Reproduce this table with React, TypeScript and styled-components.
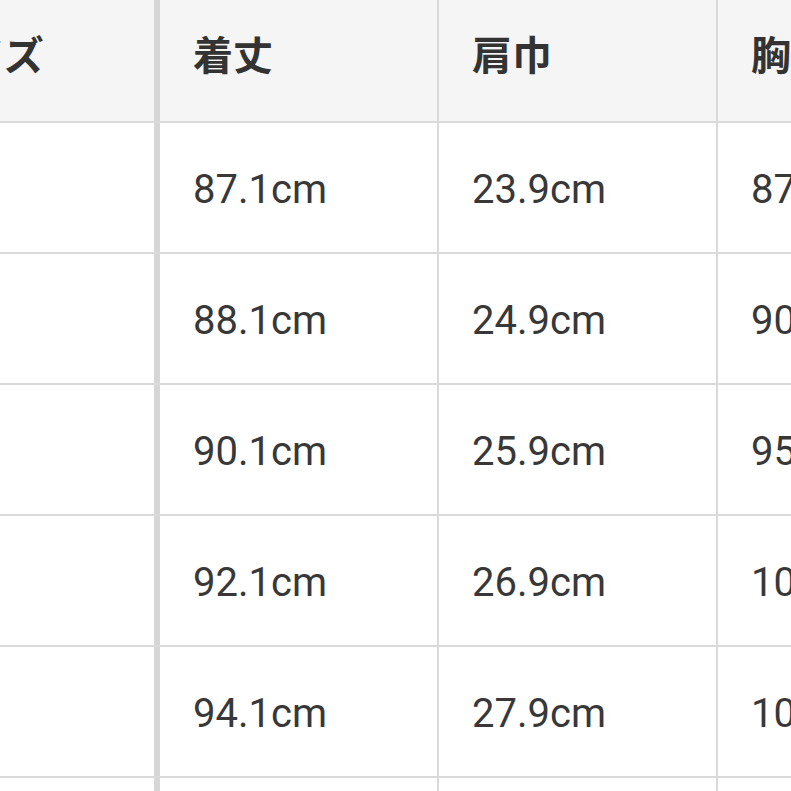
import React from 'react';
import styled, {createGlobalStyle} from 'styled-components';

const GlobalStyle = createGlobalStyle`
  html, body {
    margin: 0;
    padding: 0;
    background: #ffffff;
  }
`;

interface CellProps {
    first?: boolean;
}

const Viewport = styled.div`
  width: 791px;
  height: 791px;
  overflow: hidden;
  background: #ffffff;
`;

const Table = styled.div`
  margin-left: -108px;
  width: 1200px;
  display: flex;
  flex-direction: column;
`;

const Row = styled.div`
  display: flex;
  height: 131px;
  box-sizing: border-box;
  border-bottom: 2px solid #dadada;
`;

const HeadRow = styled(Row)`
  height: 123px;
  background: #f5f5f5;
`;

const Cell = styled.div<CellProps>`
  box-sizing: border-box;
  width: ${props => props.first ? '268px' : '279px'};
  flex-shrink: 0;
  display: flex;
  align-items: center;
  padding: 4px 0 0 33px;
  border-right: ${props => props.first ? '6px solid #d6d6d6' : '2px solid #dadada'};
  font-family: Roboto, "Noto Sans CJK JP", sans-serif;
  font-size: 40px;
  color: #383838;
`;

const HeadCell = styled(Cell)`
  padding: 0 0 16px 33px;
  font-family: "Noto Sans CJK JP", "Noto Sans", sans-serif;
  font-weight: 700;
  font-size: 40px;
  color: #333333;
`;

const headers = ['サイズ', '着丈', '肩巾', '胸囲'];

const rows = [
    ['S', '87.1cm', '23.9cm', '87cm'],
    ['M', '88.1cm', '24.9cm', '90cm'],
    ['L', '90.1cm', '25.9cm', '95cm'],
    ['XL', '92.1cm', '26.9cm', '100cm'],
    ['2XL', '94.1cm', '27.9cm', '105cm'],
    ['3XL', '96.1cm', '28.9cm', '110cm'],
];

function App() {
    return (
        <Viewport>
            <GlobalStyle/>
            <Table>
                <HeadRow>
                    {headers.map((h, i) => (
                        <HeadCell key={h} first={i === 0}>{h}</HeadCell>
                    ))}
                </HeadRow>
                {rows.map(r => (
                    <Row key={r[0]}>
                        {r.map((v, i) => (
                            <Cell key={i} first={i === 0}>{v}</Cell>
                        ))}
                    </Row>
                ))}
            </Table>
        </Viewport>
    );
}

export default App;
